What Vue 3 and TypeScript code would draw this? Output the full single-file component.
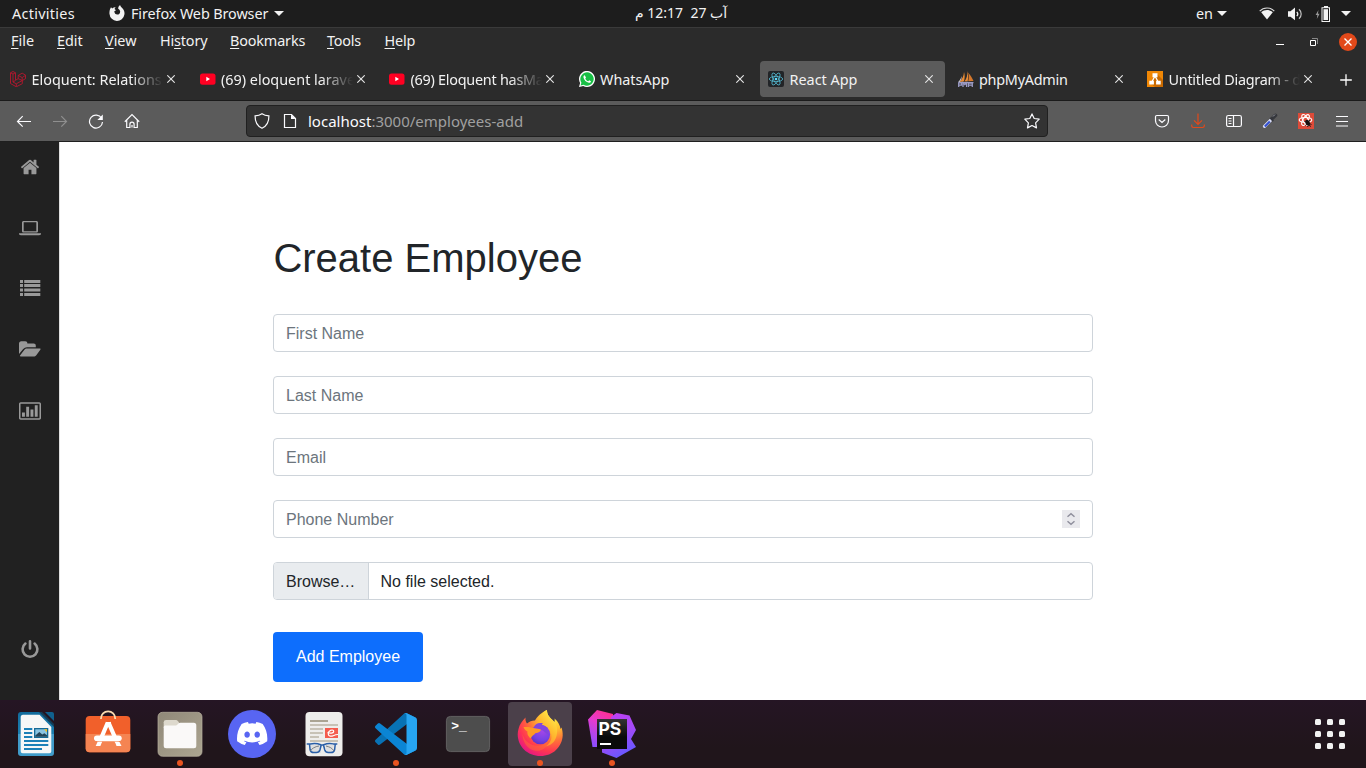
<script setup lang="ts">
interface MenuItem { before: string; key: string; after: string; cls: string }
interface Tab { icon: string; title: string; active?: boolean; fade?: boolean; cls: string }

const menu: MenuItem[] = [
  { before: '', key: 'F', after: 'ile', cls: 'm-file' },
  { before: '', key: 'E', after: 'dit', cls: 'm-edit' },
  { before: '', key: 'V', after: 'iew', cls: 'm-view' },
  { before: 'Hi', key: 's', after: 'tory', cls: 'm-history' },
  { before: '', key: 'B', after: 'ookmarks', cls: 'm-bookmarks' },
  { before: '', key: 'T', after: 'ools', cls: 'm-tools' },
  { before: '', key: 'H', after: 'elp', cls: 'm-help' },
]

const tabs: Tab[] = [
  { icon: 'laravel', title: 'Eloquent: Relations', fade: true, cls: 't-rel' },
  { icon: 'youtube', title: '(69) eloquent larave', fade: true, cls: 't-yt1' },
  { icon: 'youtube', title: '(69) Eloquent hasMa', fade: true, cls: 't-yt2' },
  { icon: 'whatsapp', title: 'WhatsApp', cls: 't-wa' },
  { icon: 'react', title: 'React App', active: true, cls: 't-react' },
  { icon: 'pma', title: 'phpMyAdmin', cls: 't-pma' },
  { icon: 'drawio', title: 'Untitled Diagram - d', fade: true, cls: 't-draw' },
]

const fields: string[] = ['First Name', 'Last Name', 'Email']
</script>

<template>
  <div class="screen">
    <header class="topbar">
      <span class="activities">Activities</span>
      <svg class="ff-mono" width="16" height="16" viewBox="0 0 16 16">
        <path fill="#f2f2f2" d="M1 4.200 2 2.200l1.200 1.200C4.600 2.500 5.400 2.300 6.600 2.300L5.500 4.100 7 5.200 5.300 6.300c.1 2 1.300 3.300 3 3.300 1.900 0 3-1.500 2.800-3.300-.2-1.300-1-2-1.900-2.500C9.200 2 9.900.9 11.100 0c.3 1.600 1.300 2.300 2.300 3.200 2 2 2.300 4.100 2 6.300A7.500 7.500 0 0 1 .5 9C.3 7.200.5 5.600 1 4.200z" />
      </svg>
      <span class="appname">Firefox Web Browser</span>
      <span class="caret caret-app"></span>
      <span class="clock" dir="rtl">آب 27&nbsp; 12:17 م</span>
      <div class="status">
        <span class="lang">en</span>
        <span class="caret"></span>
        <svg class="wifi" width="16" height="16" viewBox="0 0 16 16">
          <path fill="none" stroke="#d8d8d8" stroke-width="1.200" d="M.7 5.200C4.600.9 11.400.9 15.300 5.200" />
          <path fill="#f2f2f2" d="M2.200 6.300C5.400 3.200 10.600 3.200 13.800 6.300L8 13.500z" />
        </svg>
        <svg class="sound" width="16" height="16" viewBox="0 0 16 16">
          <path fill="#f2f2f2" d="M1 5.200h2.500L8 1.500v12.800L3.500 10.700H1z" />
          <path fill="none" stroke="#f2f2f2" stroke-width="1.200" d="M9.800 5.800c1.200 1.300 1.200 3.100 0 4.400" />
          <path fill="none" stroke="#c4c4c4" stroke-width="1.200" d="M12 3.300c2.900 2.600 2.900 6.800 0 9.400" />
        </svg>
        <svg class="battery" width="16" height="16" viewBox="0 0 16 16">
          <path fill="#999" d="M3.500 4 .6 9h1.800l-.6 4L4.600 7.800H2.900z" />
          <path fill="#f2f2f2" d="M9 0h4v1.200h2V16H6.500V1.200H9z" />
          <path fill="#1d1d1d" d="M7.500 2.200H14V15H7.500z" />
          <path fill="#f2f2f2" d="M8.500 3.200H13V14H8.500z" />
        </svg>
        <span class="caret"></span>
      </div>
    </header>

    <div class="menubar">
      <nav class="menus">
        <span v-for="m in menu" :key="m.cls" :class="m.cls">{{ m.before }}<u>{{ m.key }}</u>{{ m.after }}</span>
      </nav>
      <div class="winbtns">
        <svg width="8" height="8" viewBox="0 0 8 8"><path fill="#fff" d="M0 6h8v1H0z" /></svg>
        <svg width="8" height="8" viewBox="0 0 8 8">
          <path fill="none" stroke="#888" d="M2 .5h5.500V6" />
          <path fill="none" stroke="#fff" d="M.5 2.500h5v5h-5z" />
        </svg>
        <svg width="18" height="18" viewBox="0 0 18 18">
          <circle cx="9" cy="9" r="9" fill="#e2491a" />
          <path fill="none" stroke="#fff" stroke-width="1.400" d="m5.500 5.500 7 7m0-7-7 7" />
        </svg>
      </div>
    </div>

    <div class="tabstrip">
      <div v-for="(t, i) in tabs" :key="i" class="tabslot">
        <div class="tab" :class="{ active: t.active }">
          <svg v-if="t.icon === 'laravel'" width="16" height="16" viewBox="0 0 16 16" fill="none" stroke="#b5172f" stroke-width=".9" stroke-linejoin="round">
            <path d="M.5 1.800 3 .5l2.500 1.300v7.400l2.700-1.500V4.400l4-2.200 3.300 1.900v3.600L12.300 9.500v3.200l-6 3.100L.5 12.500zM.5 1.800 3 3l2.500-1.200M3 3v8l3.300 1.800v3M3 11l2.500-1.600M6.300 12.800l6-3.300-4.100-1.800M8.200 4.400l4 2.200 3.300-2.300M12.200 6.600v2.900" />
          </svg>
          <svg v-else-if="t.icon === 'youtube'" width="16" height="16" viewBox="0 0 16 16">
            <rect x="0" y="2.500" width="15.500" height="11.200" rx="2.500" fill="#ff0022" />
            <path fill="#fff" d="M6.300 5.800v4.400L10 8z" />
          </svg>
          <svg v-else-if="t.icon === 'whatsapp'" width="16" height="16" viewBox="0 0 16 16">
            <path fill="#fff" d="M0 16 1.100 12A8 8 0 1 1 4.200 15z" />
            <path fill="#18bf45" d="m1.600 14.400.8-2.700a6.700 6.700 0 1 1 2.200 2.100z" />
            <path fill="#fff" d="M5.700 4.300c-.9.300-1.400 1-1.200 2.200.5 2.600 2.800 4.800 5.300 5.300 1.100.2 2-.4 2.200-1.500L10.200 9.300l-.9 1c-1.400-.5-2.500-1.600-3-2.900l.7-.9z" />
          </svg>
          <svg v-else-if="t.icon === 'react'" width="16" height="16" viewBox="0 0 16 16">
            <rect width="16" height="16" rx="2" fill="#222427" />
            <g fill="none" stroke="#53b9d1" stroke-width=".8">
              <ellipse cx="8" cy="8" rx="6.700" ry="2.600" />
              <ellipse cx="8" cy="8" rx="6.700" ry="2.600" transform="rotate(60 8 8)" />
              <ellipse cx="8" cy="8" rx="6.700" ry="2.600" transform="rotate(120 8 8)" />
            </g>
            <circle cx="8" cy="8" r="1.300" fill="#61dafb" />
          </svg>
          <svg v-else-if="t.icon === 'pma'" width="16" height="16" viewBox="0 0 16 16">
            <path fill="#e98b35" d="M6 1C5.800 5 4.300 8.200 1.200 11l4.600-.5C7 7.500 6.900 4 6 1zM9.200 0c.5 4.300-.5 7.700-2.800 10.400l3.200-.1C10.500 7 10.200 3.500 9.200 0z" />
            <path fill="#d4772b" d="M10.200 1.500c2 2.500 4 5.500 5.300 8.600l-5.300.2c.8-2.800.7-5.900 0-8.800z" />
            <path fill="#c9c9d8" d="M3.800 5C3 7.500 1.800 9.300.2 11h1.500C3.200 9 3.800 7 3.800 5z" />
            <path fill="none" stroke="#9a9ac4" stroke-width="1.300" d="M.7 16v-4.200h2.800v2.300H.7M5 16v-4.200l1.800 1.700 1.800-1.700V16M10.500 16v-4h3.800v4m-3.800-1.900h3.800M.5 11.600h15" />
          </svg>
          <svg v-else width="16" height="16" viewBox="0 0 16 16">
            <rect width="16" height="16" fill="#f08705" />
            <path fill="#c96a00" d="M10 3 16 9v7H8l-5-4z" />
            <path fill="none" stroke="#fff" stroke-width="1.300" d="M8 5 4.800 11M8 5l3.200 6" />
            <path fill="#fff" d="M5.500 2.300h5v4h-5zM2.300 9.700h4.600v3.800H2.300zM9.100 9.700h4.600v3.800H9.100z" />
          </svg>
          <span class="title" :class="[t.cls, { fade: t.fade }]">{{ t.title }}</span>
          <svg class="x" width="8" height="8" viewBox="0 0 8 8"><path fill="none" stroke="#e6e6e6" stroke-width="1.100" d="m.3.3 7.400 7.400m0-7.400L.3 7.700" /></svg>
        </div>
      </div>
      <svg class="plus" width="12" height="12" viewBox="0 0 12 12"><path fill="none" stroke="#fff" stroke-width="1.300" d="M6 .2v11.600M.2 6h11.600" /></svg>
    </div>

    <div class="toolbar">
      <div class="navbtns">
        <svg width="16" height="16" viewBox="0 0 16 16" class="ln"><path d="M15 8.500H1.500M6.700 3.200 1.500 8.500l5.200 5.200" /></svg>
        <svg width="16" height="16" viewBox="0 0 16 16" class="ln dim"><path d="M1 8.500h13.500M9.300 3.200l5.200 5.300-5.200 5.200" /></svg>
        <svg width="16" height="16" viewBox="0 0 16 16" class="ln"><path d="M13.600 5.300A6.500 6.500 0 1 0 14.500 9" /><path fill="#fbfbfe" stroke="none" d="M14.800 1.500V7H9.400z" /></svg>
        <svg width="16" height="16" viewBox="0 0 16 16" class="ln home"><path d="M.8 8.700 8 1.600l7.200 7.100M2.700 7.200v7.300h3.200v-3.300a2.100 2.100 0 0 1 4.200 0v3.300h3.200V7.200M8 12v2.500" /></svg>
      </div>
      <div class="urlbar">
        <svg width="16" height="16" viewBox="0 0 16 16" class="ln"><path d="M8 .8c2 1.400 4.300 2 6.900 2.100.1 5.500-1.700 9.800-6.900 12.300C2.800 12.700 1 8.400 1.100 2.900 3.700 2.800 6 2.200 8 .8z" /></svg>
        <svg width="16" height="16" viewBox="0 0 16 16" class="ln"><path d="M3.500 1.500h6l4 4v9h-11v-13z" /><path fill="#fbfbfe" stroke="none" d="M9 1.500 13.700 6H9z" /></svg>
        <span class="url"><b>localhost</b>:3000/employees-add</span>
        <svg class="ln star" width="16" height="16" viewBox="0 0 16 16"><path stroke-linejoin="round" d="m8 .9 2.200 4.600 5 .7-3.600 3.600.9 5.100L8 12.500l-4.500 2.400.9-5.100L.8 6.200l5-.7z" /></svg>
      </div>
      <div class="extbtns">
        <svg width="16" height="16" viewBox="0 0 16 16" class="ln"><path d="M2.800 2.500h10.400c.8 0 1.300.5 1.300 1.300v3.700a6.500 6.500 0 0 1-13 0V3.800c0-.8.5-1.300 1.300-1.300zM4.700 6.500 8 9.500l3.300-3" /></svg>
        <svg width="16" height="16" viewBox="0 0 16 16" class="ln dl"><path d="M8 .5v10.800M4 7.300l4 4 4-4M1.700 11.500v1.300q0 1.700 1.700 1.700h9.200q1.700 0 1.700-1.700v-1.300" /></svg>
        <svg width="16" height="16" viewBox="0 0 16 16" class="ln"><rect x=".6" y="2.500" width="14.800" height="11" rx="1.800" /><path d="M7.500 2.500v11M2.500 5.500h3M2.500 8h3M2.500 10.500h3" /></svg>
        <svg width="16" height="16" viewBox="0 0 16 16"><path stroke="#d8dcf5" stroke-width="3.200" stroke-linecap="round" d="m2.500 13.300 7-7" /><path stroke="#3451d1" stroke-width="2" d="m2.800 13.500 5-5" /><path stroke="#35373c" stroke-width="3.600" stroke-linecap="round" d="m10.500 5.300 3-3" /><path stroke="#35373c" stroke-width="1.600" d="m8 4.800 3.300 3.300" /><path stroke="#9a9ca3" d="m11 3.500 2-2" /></svg>
        <svg width="16" height="16" viewBox="0 0 16 16">
          <rect width="16" height="16" fill="#dd4b39" />
          <g fill="none" stroke="#fff" stroke-width="1.100"><ellipse cx="7.500" cy="7" rx="6.300" ry="2.500" /><ellipse cx="7.500" cy="7" rx="6" ry="2.500" transform="rotate(60 7.500 7)" /><ellipse cx="7.500" cy="7" rx="6" ry="2.500" transform="rotate(120 7.500 7)" /></g>
          <ellipse cx="9.700" cy="9.700" rx="2.100" ry="3" fill="#1b1110" transform="rotate(-30 9.700 9.700)" />
          <path stroke="#1b1110" stroke-width=".9" fill="none" d="m6.500 8.500 7 3M7.500 12.500l4.500-5.500M9.500 14l1-2 2.500 1.500" />
        </svg>
        <svg width="16" height="16" viewBox="0 0 16 16" class="ln"><path d="M2 3.500h12M2 8.500h12M2 13h12" /></svg>
      </div>
    </div>

    <div class="page">
      <aside class="sidebar">
        <svg width="22" height="20" viewBox="-90 0 1971 1792"><path d="M1472 992v480q0 26-19 45t-45 19h-384v-384h-256v384h-384q-26 0-45-19t-19-45v-480q0-1 .5-3t.5-3l575-474 575 474q1 2 1 6zm223-69l-62 74q-8 9-21 11h-3q-13 0-21-7l-692-577-692 577q-12 8-24 7-13-2-21-11l-62-74q-8-10-7-23.500t11-21.500l719-599q32-26 76-26t76 26l244 204v-195q0-14 9-23t23-9h192q14 0 23 9t9 23v408l219 182q10 8 11 21.500t-7 23.500z" /></svg>
        <svg width="22" height="20" viewBox="0 0 22 20"><path fill-rule="evenodd" d="M4.600 2.900h12.800c.9 0 1.600.7 1.600 1.600V13c0 .9-.7 1.600-1.600 1.600H4.600c-.9 0-1.600-.7-1.600-1.600V4.500c0-.9.700-1.600 1.600-1.600zm.1 1.400v8.900h12.600V4.300zM0 15.300h22v.8c0 .7-.8 1.200-1.900 1.200H1.900C.8 17.300 0 16.800 0 16.100z" /></svg>
        <svg width="22" height="20" viewBox="0 0 22 20"><path d="M1 1h3v3H1zM5.200 1h16.100v3H5.200zM1 5h3v3H1zM5.200 5h16.100v3H5.200zM1 9.500h3v3H1zM5.200 9.500h16.100v3H5.200zM1 14h3v3H1zM5.200 14h16.100v3H5.200z" /></svg>
        <svg width="22" height="20" viewBox="0 1 22 20"><path d="M0 15V4.600C0 3.100.9 2.200 2.300 2.200h3.900c1.300 0 2.200.9 2.200 2.300h6.200c1.400 0 2.200.8 2.200 2.200v1.500H8c-1.300 0-2.900.8-3.800 1.900zM7.800 9.400h13c.8 0 1 .6.500 1.300l-4 5.500c-.6.8-1.600 1.300-2.600 1.300h-13c-.8 0-1-.5-.5-1.200l4.200-5.600c.6-.8 1.500-1.300 2.400-1.300z" /></svg>
        <svg width="22" height="20" viewBox="0 0 22 20"><path fill-rule="evenodd" d="M1.700 1.200h18.600c.9 0 1.700.8 1.700 1.700v14.200c0 .9-.8 1.700-1.700 1.700H1.700c-.9 0-1.700-.8-1.700-1.700V2.900c0-.9.8-1.700 1.700-1.700zm-.2 1.500v14.600h19V2.700z" /><path d="M3 11.500h2.900v4.200H3zM7.200 5.800h2.900v9.900H7.200zM11.500 8.600h2.900v7.100h-2.900zM15.800 4.300h2.900v11.400h-2.900z" /></svg>
        <svg class="power" width="22" height="20" viewBox="0 0 22 20"><path fill="none" stroke="#999" stroke-width="2.600" stroke-linecap="round" d="M6.400 4.600a7.400 7.400 0 1 0 9.200 0M11 2.200v7.300" /></svg>
      </aside>
      <main class="content">
        <form class="form" @submit.prevent>
          <h1>Create Employee</h1>
          <input v-for="f in fields" :key="f" class="field" type="text" :placeholder="f" />
          <div class="field phone">
            <input type="text" placeholder="Phone Number" />
            <svg width="18" height="18" viewBox="0 0 18 18"><path fill="#e9e9ed" d="M0 0h18v18H0z" /><path fill="none" stroke="#8f8f9d" stroke-width="1.500" d="m5.500 6.700 3.500-3 3.500 3M5.500 11.300l3.500 3 3.500-3" /></svg>
          </div>
          <div class="field file"><span class="browse">Browse…</span><span class="picked">No file selected.</span></div>
          <button type="submit">Add Employee</button>
        </form>
      </main>
    </div>

    <footer class="dock">
      <div class="launch">
        <svg viewBox="0 0 64 64">
          <defs><linearGradient id="wr" x2="0" y2="1"><stop offset="0" stop-color="#116b9c" /><stop offset=".49" stop-color="#1c7fb1" /><stop offset=".5" stop-color="#409bc9" /><stop offset="1" stop-color="#409bc9" /></linearGradient></defs>
          <path fill="url(#wr)" d="M17 10h20l13 14v27q0 3-3 3H17q-3 0-3-3V13q0-3 3-3z" />
          <path fill="#10608d" d="M41 10h7q2 0 2 2v7z" /><path fill="#123e59" d="m38 10 12 12v3L35 10z" />
          <path fill="#f6f7f7" d="M19 12.700h16.500L47.300 25v24.500q0 1.800-2 1.800H18.700q-2 0-2-2v-34q0-2.600 2.300-2.600z" />
          <path stroke="#1b80b8" stroke-width="2" d="M20 27h8.300M20 31h8.300M20 35h8.300M20 39h24.300M20 43h24.300M20 47h18" />
          <path fill="#156a96" d="M30 26h14.300v10H30z" /><path fill="#8ac4e2" d="M31.300 27.300h11.700v7.500H31.300z" /><path fill="#23455a" d="m31.300 33.500 4-3.500 3 2.500 2-1.200 2.700 2v1.500H31.300z" /><path fill="#f4bd1b" d="M40 27.300h3v3z" />
        </svg>
      </div>
      <div class="launch">
        <svg viewBox="0 0 64 64">
          <rect x="9.700" y="14" width="44.600" height="36.300" rx="4" fill="#f1602b" /><path fill="#f58452" d="M9.700 32h44.600v14.300q0 4-4 4H13.700q-4 0-4-4z" />
          <path fill="none" stroke="#fbdcb0" stroke-width="1.800" d="M25 17v-.5a7 7 0 0 1 14.200 0v.5" />
          <path fill="none" stroke="#fff" stroke-width="4.200" d="M31.800 20.500 23.500 40M32.500 20.500 41 40" /><path fill="#fff" d="M30 20h5v4h-5zM21.500 40h4.500l-1.600 4h-4.700zM39 40h4.500l2 4h-5z" />
          <rect x="18" y="33.500" width="27.700" height="5.600" rx="2.800" fill="#fff" /><path stroke="#f8a884" stroke-width=".8" d="M21 39.500h22" />
        </svg>
      </div>
      <div class="launch">
        <svg viewBox="0 0 64 64">
          <defs><linearGradient id="fl" x2="1" y2="1"><stop offset="0" stop-color="#8f8878" /><stop offset="1" stop-color="#aca591" /></linearGradient></defs>
          <rect x="10" y="10.300" width="44" height="44" rx="4.500" fill="url(#fl)" stroke="#b9b2a0" stroke-width=".7" />
          <path fill="#ddd9cd" d="M18 18h10q1 0 2 1.300L32 22v4H15.700v-5.700Q15.700 18 18 18z" />
          <path fill="#faf9f8" d="M15.700 25q0-1.500 1.500-1.500h10.500q1 0 1.800-.9l1-1q.8-.9 1.800-.9h13.500q2.500 0 2.500 2.500v20.600q0 2.500-2.500 2.500H18.200q-2.500 0-2.500-2.500z" />
        </svg>
        <i class="dot"></i>
      </div>
      <div class="launch">
        <svg viewBox="0 0 64 64">
          <circle cx="32" cy="32" r="24" fill="#5865f2" />
          <path fill="#fff" transform="translate(17 20) scale(.2386)" d="M107.700,8.070A105.150,105.150,0,0,0,81.470,0a72.060,72.060,0,0,0-3.360,6.830A97.680,97.680,0,0,0,49,6.830,72.370,72.370,0,0,0,45.640,0,105.890,105.890,0,0,0,19.390,8.090C2.790,32.650-1.710,56.600.54,80.210h0A105.730,105.730,0,0,0,32.710,96.360,77.700,77.700,0,0,0,39.600,85.250a68.420,68.420,0,0,1-10.850-5.180c.91-.66,1.800-1.340,2.660-2a75.570,75.570,0,0,0,64.320,0c.87.71,1.760,1.390,2.660,2a68.680,68.680,0,0,1-10.870,5.190,77,77,0,0,0,6.890,11.100A105.250,105.250,0,0,0,126.600,80.220h0C129.240,52.840,122.090,29.110,107.700,8.070ZM42.450,65.690C36.180,65.690,31,60,31,53s5-12.740,11.430-12.740S54,46,53.890,53,48.840,65.690,42.450,65.690Zm42.240,0C78.410,65.690,73.250,60,73.250,53s5-12.740,11.440-12.740S96.230,46,96.120,53,91.080,65.690,84.690,65.690Z" />
        </svg>
      </div>
      <div class="launch">
        <svg viewBox="0 0 64 64">
          <rect x="13.500" y="10" width="37" height="44.300" rx="4" fill="#eeedeb" />
          <path stroke="#aaa493" stroke-width="2" d="M18 19h18" /><path stroke="#c7c2b6" stroke-width="2" d="M18 23h28M18 27h13M18 31h13M18 35h9M18 39h28" />
          <path fill="#f45b4d" d="M33 26h13v10H33z" /><path fill="none" stroke="#fff" stroke-width="1.200" d="M35.500 30.500c3.500 1.300 7 .3 6-1.800-1-1.500-5-.2-5.300 2.800 0 2.600 2.500 3.300 5 2.200 2-.9 3-1.200 4.800-1.200" />
          <path fill="#dedfe0" d="M18 43h11v8H18zM33 43h9l-2 8h-5z" />
          <path fill="none" stroke="#295ea7" stroke-width="1.500" d="M14.700 41.900h3.500q6-1.200 10.500.8 1.500.6 3 0 5-2 9.500-.8h4.100M17.500 42.500l.6 5.300c.5 2 1.300 2.800 3.500 2.800h2.800c2.200 0 3-.9 3.600-2.800l1.200-4.800M43.200 42.500l-.6 5.300c-.5 2-1.300 2.800-3.500 2.800h-2.800c-2.200 0-3-.9-3.600-2.800l-1.200-4.800" />
          <path fill="none" stroke="#6f7478" stroke-width=".9" d="M18 49c2-2.500 5-4.500 9-5M34 44c4 1 6 2 8 5" />
        </svg>
      </div>
      <div class="launch">
        <svg viewBox="0 0 64 64">
          <g transform="translate(11 11) scale(.42)">
            <path fill="#0872b5" d="M96.460 10.800 75.860.88A6.200 6.200 0 0 0 68.750 2.080L1.300 63.580a4.170 4.170 0 0 0 0 6.170l5.510 5a4.170 4.170 0 0 0 5.320.24L93.360 13.370C96.090 11.300 100 13.250 100 16.670z" />
            <path fill="#0b85d4" d="M96.460 89.200 75.860 99.120a6.200 6.200 0 0 1-7.110-1.200L1.300 36.420a4.170 4.170 0 0 1 0-6.170l5.510-5a4.170 4.170 0 0 1 5.320-.24l81.230 61.620c2.730 2.070 6.640.12 6.640-3.300z" />
            <path fill="#27a5f2" d="M75.860 99.130a6.230 6.230 0 0 1-7.110-1.210C71.060 100.220 75 98.590 75 95.330V4.670C75 1.410 71.060-.22 68.750 2.080a6.230 6.230 0 0 1 7.110-1.210l20.600 9.910A6.250 6.250 0 0 1 100 16.410v67.180a6.250 6.250 0 0 1-3.540 5.630z" />
          </g>
        </svg>
        <i class="dot"></i>
      </div>
      <div class="launch">
        <svg viewBox="0 0 64 64">
          <rect x="10.400" y="14.400" width="43.200" height="35.200" rx="4" fill="#4d4d4d" stroke="#6b6b6b" stroke-width=".8" />
          <text class="prompt" x="15.200" y="27.800">&gt;_</text>
        </svg>
      </div>
      <div class="launch current">
        <svg viewBox="0 0 64 64">
          <defs>
            <radialGradient id="f1" cx=".78" cy=".12" r="1"><stop offset="0" stop-color="#fff44f" /><stop offset=".3" stop-color="#ffc02f" /><stop offset=".55" stop-color="#ff7139" /><stop offset=".78" stop-color="#ff3750" /><stop offset="1" stop-color="#e31587" /></radialGradient>
            <radialGradient id="f2" cx=".6" cy=".3" r=".8"><stop offset="0" stop-color="#a746e8" /><stop offset=".6" stop-color="#7542e5" /><stop offset="1" stop-color="#5b2fb8" /></radialGradient>
            <linearGradient id="f3" x1=".8" x2=".3" y2="1"><stop offset="0" stop-color="#fff44f" /><stop offset=".5" stop-color="#ffbd2f" /><stop offset="1" stop-color="#ff8a30" /></linearGradient>
          </defs>
          <path fill="url(#f1)" d="M10.500 27c1-4.500 3.500-8 7-11.500-.2 2.300.2 4.300 1.500 6 2.500-2 5-3 8-2.900C29 14.500 34 10 39 8c0 4 1.500 6.500 5.500 10l1.800 2c.4-1 .6-2.200.2-3.500 4 3.300 5.500 7 6 10.500l1-1.500c.8 2 1.300 5 1.200 8C54 45 45 54 32.500 54 19.500 54 9.800 44.500 9.700 32.500c0-1.900.3-3.800.8-5.500z" />
          <path fill="url(#f3)" d="M31 19.500C32 14 35 9.500 39 8c0 4 1.500 6.500 5.500 10 4.500 4.200 5.500 10 4 16-1.700 6.500-6 9.500-11 10.500 5-3.500 7-8 5.500-13-1-4.500-3.500-7-7-9z" />
          <circle cx="32.300" cy="32.500" r="9.800" fill="url(#f2)" />
          <path fill="#8146dc" d="M26 25c1.500-3.500 5-4.800 9-3.500l-1.200 1.200c2.800.8 5 2 6.500 4.300l-2-.4c1.500 2 2 4 1.500 6l-5-4z" />
          <path fill="#ff9a26" d="M15.500 25c4-.4 8.500.3 12.500 1.500 2.500.3 4 .6 5 1.200-.5 2-2.400 3-5.700 3.500-1 1.500-4 3-4.500 5.300-2-1.500-4-4.500-3.300-7-1.800-.8-3.300-2.300-4-4.500z" />
          <path fill="#ff7434" d="M14.300 31.500c2.200 8.500 9.500 12.800 16.500 12.200 3.300-.2 6.700-1.500 8.500-4.500 1 6-5 10.300-12 9.500-7.500-1-12.500-8-13-17.200z" opacity=".45" />
        </svg>
        <i class="dot"></i>
      </div>
      <div class="launch">
        <svg viewBox="0 0 64 64">
          <defs>
            <linearGradient id="p1" x1=".7" x2=".3" y2="1"><stop offset="0" stop-color="#ff2f90" /><stop offset=".4" stop-color="#e53bd0" /><stop offset="1" stop-color="#8a4dff" /></linearGradient>
            <linearGradient id="p2" x2=".4" y2="1"><stop offset="0" stop-color="#c63df2" /><stop offset=".6" stop-color="#a24af7" /><stop offset="1" stop-color="#6b57ff" /></linearGradient>
            <linearGradient id="p3" x2="0" y2="1"><stop offset="0" stop-color="#343434" /><stop offset=".6" stop-color="#0a0a0a" /></linearGradient>
          </defs>
          <path fill="url(#p1)" d="M8 17.500 17 8l16 4v33H12.500z" /><path fill="url(#p2)" d="m31.500 14.500 5-3.500 13 2.500 6.500 14.500L51 37l5 8-19.500 11L22 50.500V47z" />
          <path fill="url(#p3)" d="M17 17h30v30H17z" />
          <text class="ps" x="18.500" y="33">PS</text><path fill="#fff" d="M20 41h11v2H20z" />
        </svg>
        <i class="dot"></i>
      </div>
      <div class="apps"><i v-for="n in 9" :key="n"></i></div>
    </footer>
  </div>
</template>

<style>
body { margin: 0; overflow: hidden; }
</style>

<style scoped>
.screen { width: 1366px; height: 768px; display: flex; flex-direction: column; overflow: hidden; font-family: "Noto Sans", "DejaVu Sans", sans-serif; font-size: 14.4px; color: #f2f2f2; background: #2b2b2b; }
svg { display: block; flex: none; }
.topbar { height: 27px; flex: none; box-sizing: content-box; border-bottom: 1px solid #3a3a3a; background: #1d1d1d; display: flex; align-items: center; line-height: 27px; white-space: nowrap; }
.topbar > span:not(.caret), .lang { height: 27px; }
.activities { width: 97px; padding-left: 12px; letter-spacing: .3px; box-sizing: border-box; line-height: 28px; }
.ff-mono { margin: 0 6px 2px 12px; }
.appname { width: 143px; letter-spacing: -.1px; line-height: 28px; }
.caret { width: 0; height: 0; border: 5px solid transparent; border-top-color: #f2f2f2; border-bottom: 0; }
.caret-app { margin-right: 351px; }
.clock { width: 102px; font-size: 14px; white-space: pre; text-align: left; line-height: 26px; }
.status { margin-left: auto; display: flex; align-items: center; padding-right: 15px; }
.lang { width: 21px; letter-spacing: -.2px; line-height: 28px; }
.wifi { margin-left: 32px; }
.sound { margin-left: 12px; }
.battery { margin-left: 12px; margin-right: 10px; }

.menubar { height: 27px; flex: none; display: flex; align-items: center; justify-content: space-between; padding: 0 9px 0 11px; }
.menus { display: grid; grid-template-columns: 46px 48px 55px 70px 97px 57.500px 60px; line-height: 26px; height: 27px; }
.menus u { text-decoration-thickness: 1px; text-underline-offset: 2px; }
.m-history { letter-spacing: -.15px; }
.m-bookmarks { letter-spacing: -.15px; }
.m-tools, .m-help { letter-spacing: -.2px; }
.winbtns { display: flex; align-items: center; gap: 26px; padding-top: 1px; }
.winbtns svg:last-child { margin-left: -5px; }

.tabstrip { height: 45px; flex: none; border-bottom: 1px solid #1b1b1b; display: flex; }
.tabslot { width: 189.500px; padding: 6px 2.500px 0 2px; box-sizing: border-box; }
.tab { height: 36px; border-radius: 4px; display: flex; align-items: center; padding: 0 12px 0 8px; }
.tab.active { background: #5b5b5b; }
.title { flex: 1; min-width: 0; margin: 0 4px 0 5.500px; white-space: nowrap; line-height: 37px; }
.fade { -webkit-mask-image: linear-gradient(to left, transparent, #000 32px); mask-image: linear-gradient(to left, transparent, #000 32px); }
.t-rel { letter-spacing: 0; }
.t-yt1 { letter-spacing: 0; }
.t-yt2 { letter-spacing: -.25px; }
.t-pma { letter-spacing: -.25px; }
.t-draw { letter-spacing: -.25px; }
.plus { margin: 19px 0 0 13px; }

.toolbar { height: 40px; flex: none; background: #5b5b5b; border-bottom: 1px solid #1f1f1f; display: flex; align-items: center; }
.navbtns { display: flex; gap: 20px; width: 230px; padding-left: 16px; }
.ln { fill: none; stroke: #fbfbfe; stroke-width: 1.200; }
.dim { stroke: #8f8f8f; }
.dl { stroke: #e2491a; }
.home { margin-left: -.5px; }
.urlbar { width: 802px; height: 32px; box-sizing: border-box; border: 1px solid #202020; border-radius: 4px; background: #333; display: flex; align-items: center; padding: 0 7px; gap: 12px; }
.url { font-size: 15px; line-height: 30px; color: #a0a0a0; margin-left: -2px; }
.url b { font-weight: 400; color: #fbfbfe; }
.star { margin-left: auto; }
.extbtns { display: flex; gap: 20px; margin-left: 106px; }

.page { height: 558px; flex: none; display: flex; background: #fff; }
.sidebar { width: 60px; flex: none; background: #212121; border-right: 1px solid #e0e0e0; display: flex; flex-direction: column; align-items: center; padding: 15px 0 41px; box-sizing: border-box; gap: 41px; }
.sidebar svg { fill: #999; }
.power { margin-top: auto; }
.content { flex: 1; font-family: "Liberation Sans", Arial, sans-serif; color: #212529; }
.form { width: 820px; margin-left: 213px; padding-top: 92px; display: flex; flex-direction: column; }
h1 { margin: 0 0 32px; font-size: 40px; line-height: 48px; font-weight: 400; text-indent: .4px; }
.field { height: 38px; box-sizing: border-box; border: 1px solid #ced4da; border-radius: 4px; margin: 0 0 24px; padding: 1px 12px 0; font: 16px/24px "Liberation Sans", Arial, sans-serif; color: #212529; background: #fff; display: flex; align-items: center; outline: 0; }
.phone { padding-top: 0; }
.phone input { flex: 1; height: 36px; box-sizing: border-box; border: 0; padding: 2px 0 0; font: inherit; outline: 0; background: none; }
input::placeholder { color: #6c757d; opacity: 1; }
.file { padding: 0; overflow: hidden; margin-bottom: 32px; }
.browse { height: 36px; width: 95px; flex: none; line-height: 38px; padding-left: 12px; box-sizing: border-box; background: #e9ecef; border-right: 1px solid #ced4da; margin-right: 11.500px; }
.picked { height: 36px; line-height: 38px; }
button { width: 150px; height: 50px; border: 0; border-radius: 4px; background: #0d6efd; color: #fff; font: 16px/24px "Liberation Sans", Arial, sans-serif; padding: 0; }

.dock { height: 68px; flex: none; background: linear-gradient(#25162400, #20151b 70%), #251524; display: flex; gap: 8px; padding: 2px 0 2px 4px; box-sizing: border-box; }
.launch { width: 64px; height: 64px; position: relative; border-radius: 4px; }
.launch svg { width: 64px; height: 64px; }
.current { background: #4b404a; }
.dot { position: absolute; left: 29px; top: 58px; width: 6px; height: 6px; border-radius: 50%; background: #e95420; }
.prompt { font: bold 13px "Liberation Mono", monospace; fill: #fff; }
.ps { font: bold 17.500px Inter, "Open Sans", sans-serif; fill: #fff; }
.apps { margin: 17px 21px 0 auto; display: grid; grid-template-columns: repeat(3, 6px); grid-auto-rows: 6px; gap: 6px; }
.apps i { background: #f2f2f2; border-radius: 1.500px; }
</style>
